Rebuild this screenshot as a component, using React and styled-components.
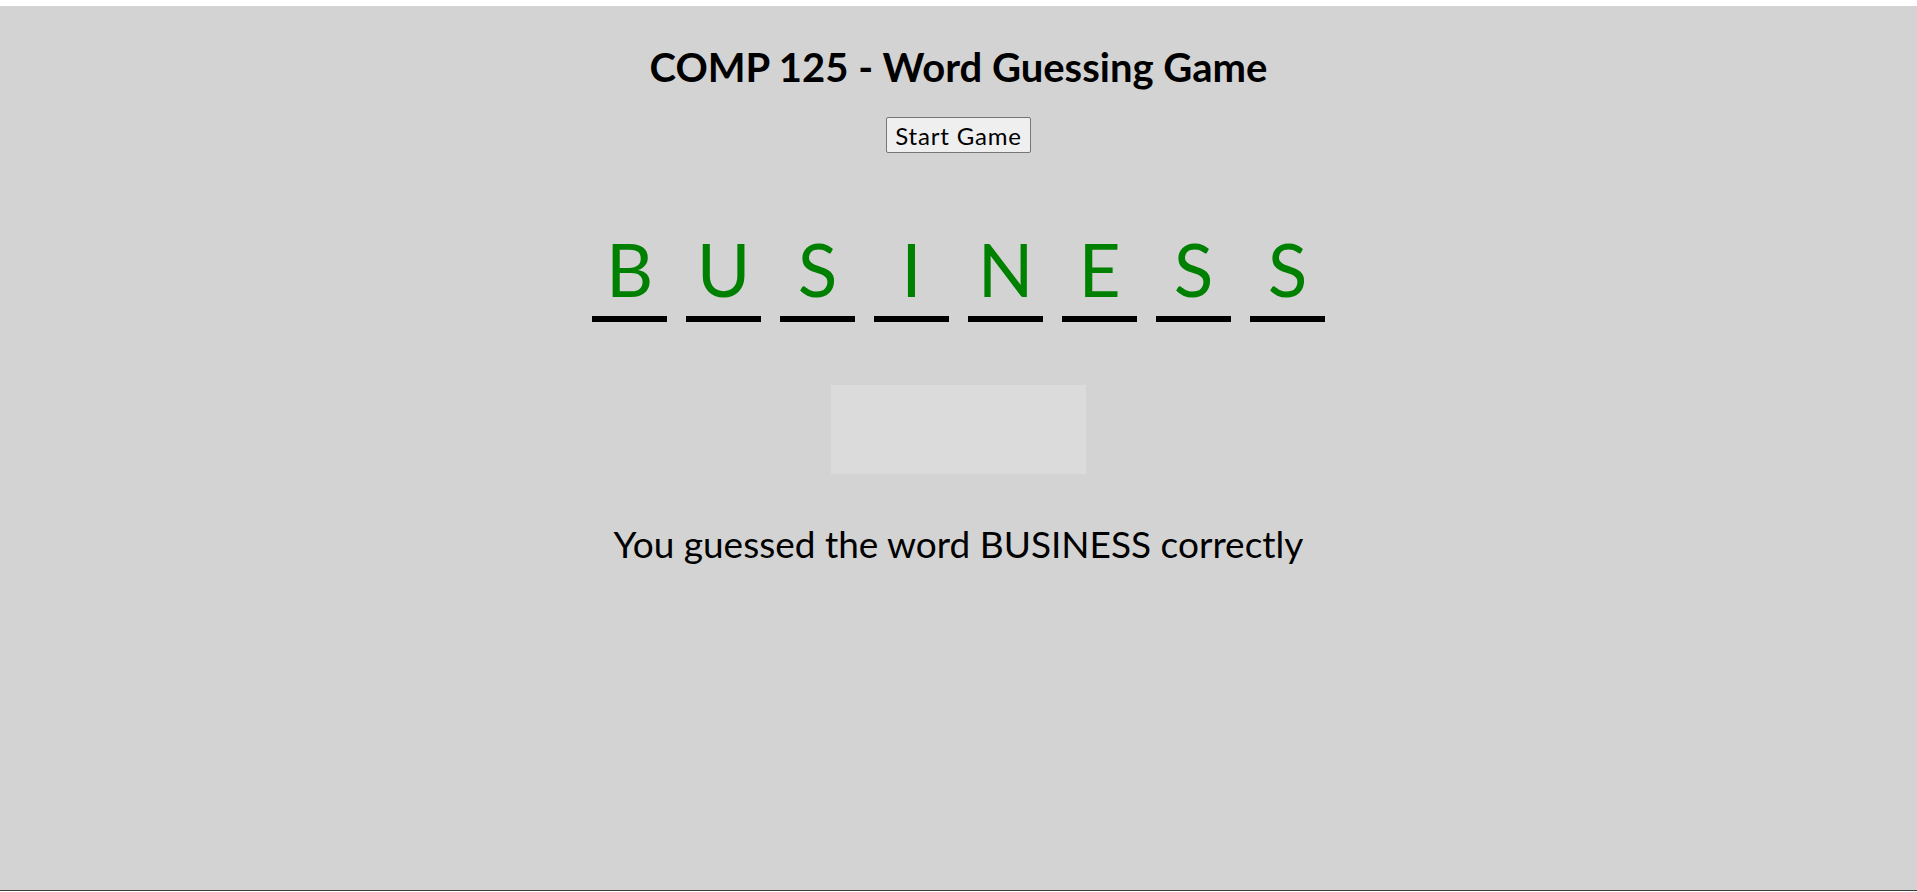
import styled, { createGlobalStyle } from "styled-components";

const GlobalStyle = createGlobalStyle`
  html, body {
    margin: 0;
    padding: 0;
    background: #ffffff;
  }
  body {
    font-family: "Lato", "Open Sans", sans-serif;
  }
`;

const word = "BUSINESS";

const App = () => {
  return (
    <>
      <GlobalStyle />
      <Page>
        <Title>COMP 125 - Word Guessing Game</Title>
        <StartButton type="button">Start Game</StartButton>
        <LetterRow>
          {word.split("").map((ch, i) => (
            <Letter key={i}>{ch}</Letter>
          ))}
        </LetterRow>
        <GuessBox />
        <Message>You guessed the word {word} correctly</Message>
      </Page>
    </>
  );
};

const Page = styled.div`
  margin-top: 6px;
  height: 885px;
  box-sizing: border-box;
  background: #d3d3d3;
  border-bottom: 1px solid #3c3c3c;
  display: flex;
  flex-direction: column;
  align-items: center;
  padding-top: 37px;
`;

const Title = styled.h1`
  margin: 0;
  font-size: 40px;
  line-height: 48px;
  font-weight: 700;
  color: #000;
`;

const StartButton = styled.button`
  margin-top: 26px;
  height: 36px;
  width: 145px;
  padding: 0;
  font-family: inherit;
  font-size: 24px;
  letter-spacing: 0.8px;
  color: #000;
  background: #efefef;
  border: 1px solid #767676;
  border-radius: 2px;
`;

const LetterRow = styled.div`
  display: flex;
  gap: 19px;
  margin-top: 71px;
`;

const Letter = styled.div`
  width: 75px;
  text-align: center;
  font-size: 73px;
  line-height: 90px;
  color: #008000;
  border-bottom: 6px solid #000;
  padding-bottom: 2px;
`;

const GuessBox = styled.div`
  width: 255px;
  height: 89px;
  margin-top: 63px;
  background: #dbdbdb;
`;

const Message = styled.p`
  margin: 47px 0 0;
  font-size: 37px;
  line-height: 46px;
  color: #000;
`;

export default App;
